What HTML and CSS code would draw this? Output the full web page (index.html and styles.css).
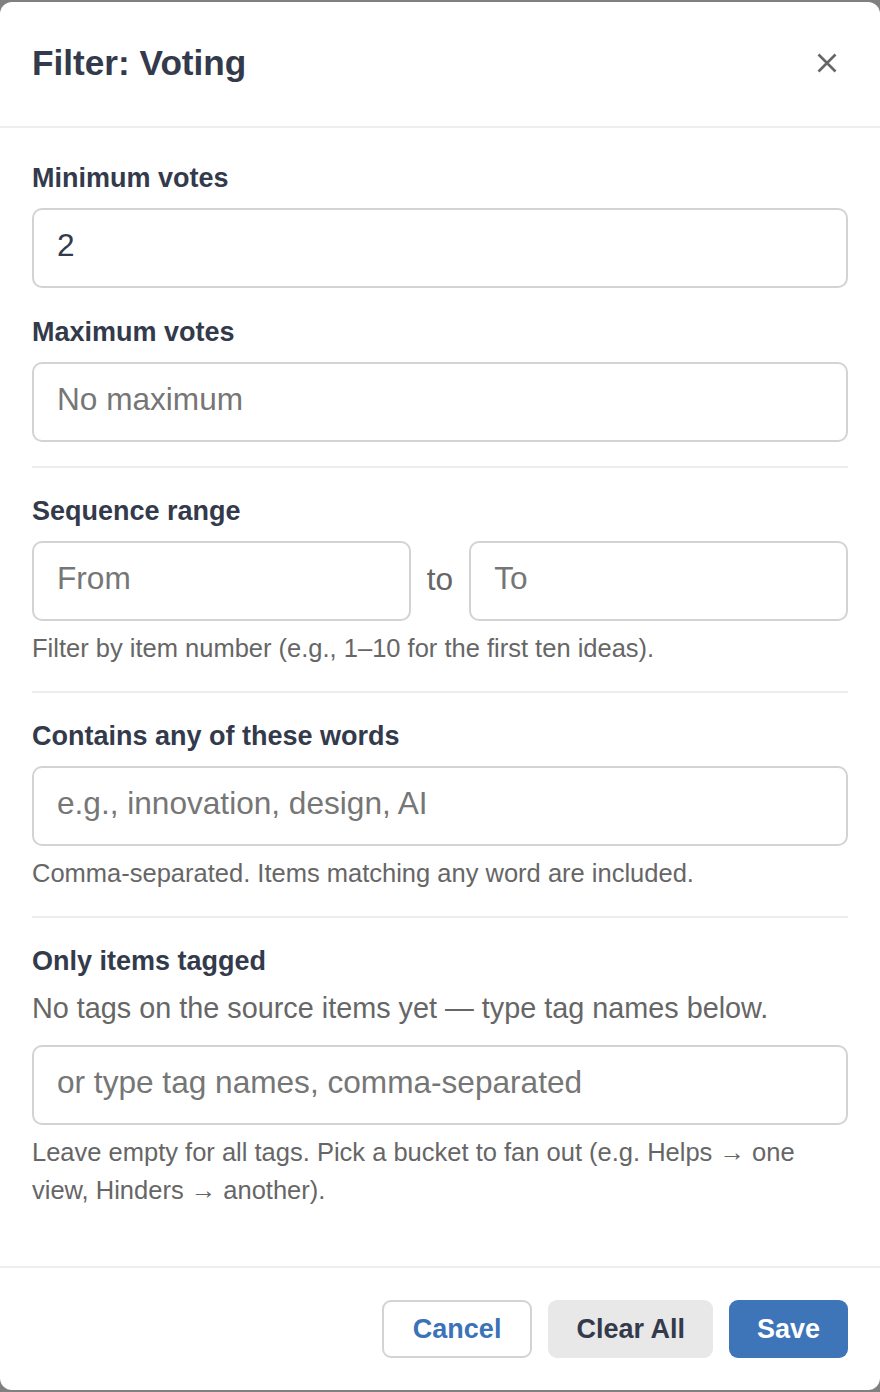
FILE: index.html
```html
<!DOCTYPE html>
<html lang="en">
<head>
<meta charset="utf-8">
<title>Filter: Voting</title>
<link rel="stylesheet" href="styles.css">
</head>
<body>
<div class="modal">
  <header class="modal-header">
    <h1 class="modal-title">Filter: Voting</h1>
    <button class="close-btn" aria-label="Close">
      <svg width="20" height="20" viewBox="0 0 20 20"><path d="M1.5 1.5 L18.5 18.5 M18.5 1.5 L1.5 18.5" stroke="#666" stroke-width="2.6" stroke-linecap="butt" fill="none"/></svg>
    </button>
  </header>
  <main class="modal-body">
    <section class="section first">
      <div class="field">
        <label class="label">Minimum votes</label>
        <input class="input" type="text" value="2">
      </div>
      <div class="field">
        <label class="label">Maximum votes</label>
        <input class="input" type="text" placeholder="No maximum">
      </div>
    </section>
    <section class="section">
      <label class="label">Sequence range</label>
      <div class="range-row">
        <input class="input" type="text" placeholder="From">
        <span class="range-sep">to</span>
        <input class="input" type="text" placeholder="To">
      </div>
      <p class="helper">Filter by item number (e.g., 1–10 for the first ten ideas).</p>
    </section>
    <section class="section">
      <label class="label">Contains any of these words</label>
      <input class="input" type="text" placeholder="e.g., innovation, design, AI">
      <p class="helper">Comma-separated. Items matching any word are included.</p>
    </section>
    <section class="section last">
      <label class="label label-tight">Only items tagged</label>
      <p class="desc">No tags on the source items yet — type tag names below.</p>
      <input class="input" type="text" placeholder="or type tag names, comma-separated">
      <p class="helper">Leave empty for all tags. Pick a bucket to fan out (e.g. Helps → one view, Hinders → another).</p>
    </section>
  </main>
  <footer class="modal-footer">
    <button class="btn btn-outline">Cancel</button>
    <button class="btn btn-grey">Clear All</button>
    <button class="btn btn-primary">Save</button>
  </footer>
</div>
</body>
</html>
```
FILE: styles.css
```css
* { box-sizing: border-box; }
html, body {
  margin: 0;
  padding: 0;
}
body {
  background: #808080;
  font-family: "Liberation Sans", Arial, sans-serif;
  height: 1392px;
  overflow: hidden;
}
.modal {
  margin-top: 2px;
  height: 1388px;
  background: #fff;
  border-radius: 12px;
  display: flex;
  flex-direction: column;
  overflow: hidden;
}
.modal-header {
  display: flex;
  align-items: center;
  justify-content: space-between;
  padding: 41px 32px 43px 32px;
  border-bottom: 2px solid #eeeeee;
}
.modal-title {
  margin: 0;
  font-size: 35.2px;
  line-height: 40px;
  font-weight: 700;
  color: #333a4b;
}
.close-btn {
  border: 0;
  background: transparent;
  padding: 0;
  margin-right: 11px;
  width: 20px;
  height: 20px;
  display: flex;
  cursor: pointer;
}
.modal-body {
  flex: 1;
  padding: 34px 32px 0 32px;
}
.section {
  display: flex;
  flex-direction: column;
  padding: 27px 0 24px 0;
  border-bottom: 2px solid #ececec;
}
.section.first { padding-top: 0; }
.section.last { border-bottom: 0; }
.field {
  display: flex;
  flex-direction: column;
}
.field + .field { margin-top: 28px; }
.label {
  font-size: 27px;
  line-height: 32px;
  font-weight: 700;
  color: #333a4b;
  margin-bottom: 14px;
}
.label.label-tight { margin-bottom: 11px; }
.input {
  width: 100%;
  height: 80px;
  border: 2px solid #d3d3d3;
  border-radius: 10px;
  padding: 0 23px 5px 23px;
  font-family: "Liberation Sans", Arial, sans-serif;
  font-size: 31.6px;
  color: #333a4b;
  background: #fff;
  outline: none;
}
.input::placeholder { color: #767676; opacity: 1; }
.range-row {
  display: flex;
  align-items: center;
  gap: 16px;
}
.range-row .input { flex: 1; min-width: 0; }
.range-sep {
  font-size: 31.6px;
  color: #666;
  padding-bottom: 4px;
}
.helper {
  margin: 8px 0 0 0;
  font-size: 25.5px;
  line-height: 38px;
  color: #666;
}
.desc {
  margin: 0 0 17px 0;
  font-size: 28.8px;
  line-height: 40px;
  color: #666;
}
.modal-footer {
  display: flex;
  justify-content: flex-end;
  gap: 16px;
  padding: 32px;
  border-top: 2px solid #eeeeee;
}
.btn {
  height: 58px;
  padding: 0 28px;
  border-radius: 9px;
  font-family: "Liberation Sans", Arial, sans-serif;
  font-size: 27px;
  font-weight: 700;
  border: 0;
  cursor: pointer;
}
.btn-outline {
  background: #fff;
  color: #3b73b8;
  border: 2px solid #d3d3d3;
  padding: 0 29px;
}
.btn-grey {
  background: #e8e8e8;
  color: #333a4b;
}
.btn-primary {
  background: #3e75b8;
  color: #fff;
}
```
